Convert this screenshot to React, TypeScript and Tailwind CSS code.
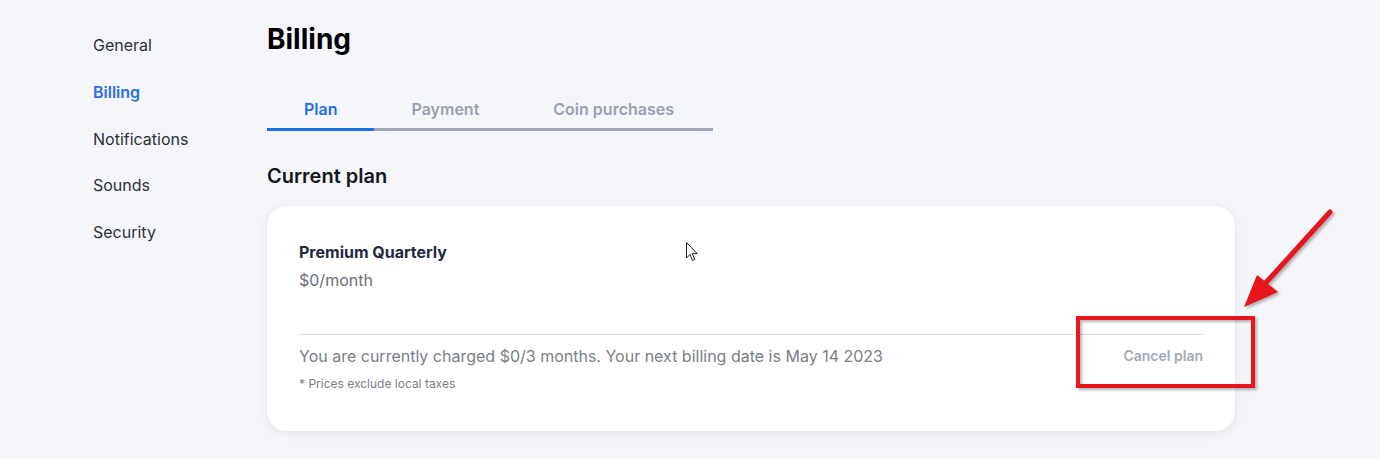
import React from 'react';

const NAV = ['General', 'Billing', 'Notifications', 'Sounds', 'Security'];
const TABS = ['Plan', 'Payment', 'Coin purchases'];

function Sidebar({ active }: { active: string }) {
  return (
    <nav className="w-[174px] shrink-0 pt-[33px] flex flex-col gap-[22.75px]">
      {NAV.map(n => (
        <a
          key={n}
          href="#"
          className={`text-[16px] leading-[24px] ${n === active ? 'text-[#2a6fdf] font-semibold' : 'text-[#2c3038]'}`}
        >
          {n}
        </a>
      ))}
    </nav>
  );
}

function Tabs({ active }: { active: string }) {
  return (
    <div className="mt-[40px] flex w-fit">
      {TABS.map(t => (
        <button
          key={t}
          className={`px-[37px] last:pr-[39px] pb-[7px] text-[16px] leading-[24px] font-semibold border-b-[3px] ${
            t === active ? 'text-[#1f6fe0] border-[#1a6fe6]' : 'text-[#9aa0b3] border-[#a2a6b8]'
          }`}
        >
          {t}
        </button>
      ))}
    </div>
  );
}

function PlanCard() {
  return (
    <div className="mt-[16px] w-[968px] bg-white rounded-[20px] shadow-[0_2px_10px_rgba(20,30,60,0.08)] px-[32px] pt-[35px] pb-[39px]">
      <div className="text-[16px] leading-[22px] font-bold text-[#1f2940]">Premium Quarterly</div>
      <div className="mt-[5px] text-[16px] leading-[24px] text-[#6b6f7a]">$0/month</div>
      <div className="mt-[42px] border-t border-[#dcdee3]" />
      <div className="pt-[9px] flex items-center justify-between">
        <span className="text-[16px] leading-[24px] text-[#7a7e88]">
          You are currently charged $0/3 months. Your next billing date is May 14 2023
        </span>
        <button className="text-[14px] leading-[20px] font-semibold text-[#a3a8b8]">Cancel plan</button>
      </div>
      <div className="mt-[8px] text-[12px] leading-[16px] text-[#7a7e88]">* Prices exclude local taxes</div>
    </div>
  );
}

function Annotation() {
  return (
    <svg className="absolute inset-0 pointer-events-none" width="1380" height="459" viewBox="0 0 1380 459">
      <defs>
        <filter id="sh" x="-20%" y="-20%" width="140%" height="140%">
          <feDropShadow dx="2" dy="2" stdDeviation="1.5" floodColor="#000" floodOpacity="0.3" />
        </filter>
      </defs>
      <g filter="url(#sh)">
        <rect x="1078" y="318" width="175" height="68" fill="none" stroke="#e5121a" strokeWidth="4" />
        <line x1="1330" y1="212" x2="1262" y2="287" stroke="#e5121a" strokeWidth="5" strokeLinecap="round" />
        <polygon points="1244,307 1257,275 1278,292" fill="#e5121a" />
      </g>
      {/* mouse cursor */}
      <path
        d="M686.5 242.5 L686.5 258 L690 254.5 L692.5 260.5 L694.8 259.5 L692.3 253.6 L697.2 253.6 Z"
        fill="#fff"
        stroke="#222"
        strokeWidth="1"
        strokeLinejoin="round"
      />
    </svg>
  );
}

export default function App() {
  return (
    <div className="relative w-[1380px] h-[459px] overflow-hidden bg-[#f5f6f9] font-['Inter',sans-serif]">
      <div className="flex pl-[93px]">
        <Sidebar active="Billing" />
        <main className="flex-1 pt-[21px]">
          <h1 className="text-[28px] leading-[36px] font-bold text-black">Billing</h1>
          <Tabs active="Plan" />
          <h2 className="mt-[31px] text-[20px] leading-[28px] font-semibold text-[#14161b]">Current plan</h2>
          <PlanCard />
        </main>
      </div>
      <Annotation />
    </div>
  );
}
